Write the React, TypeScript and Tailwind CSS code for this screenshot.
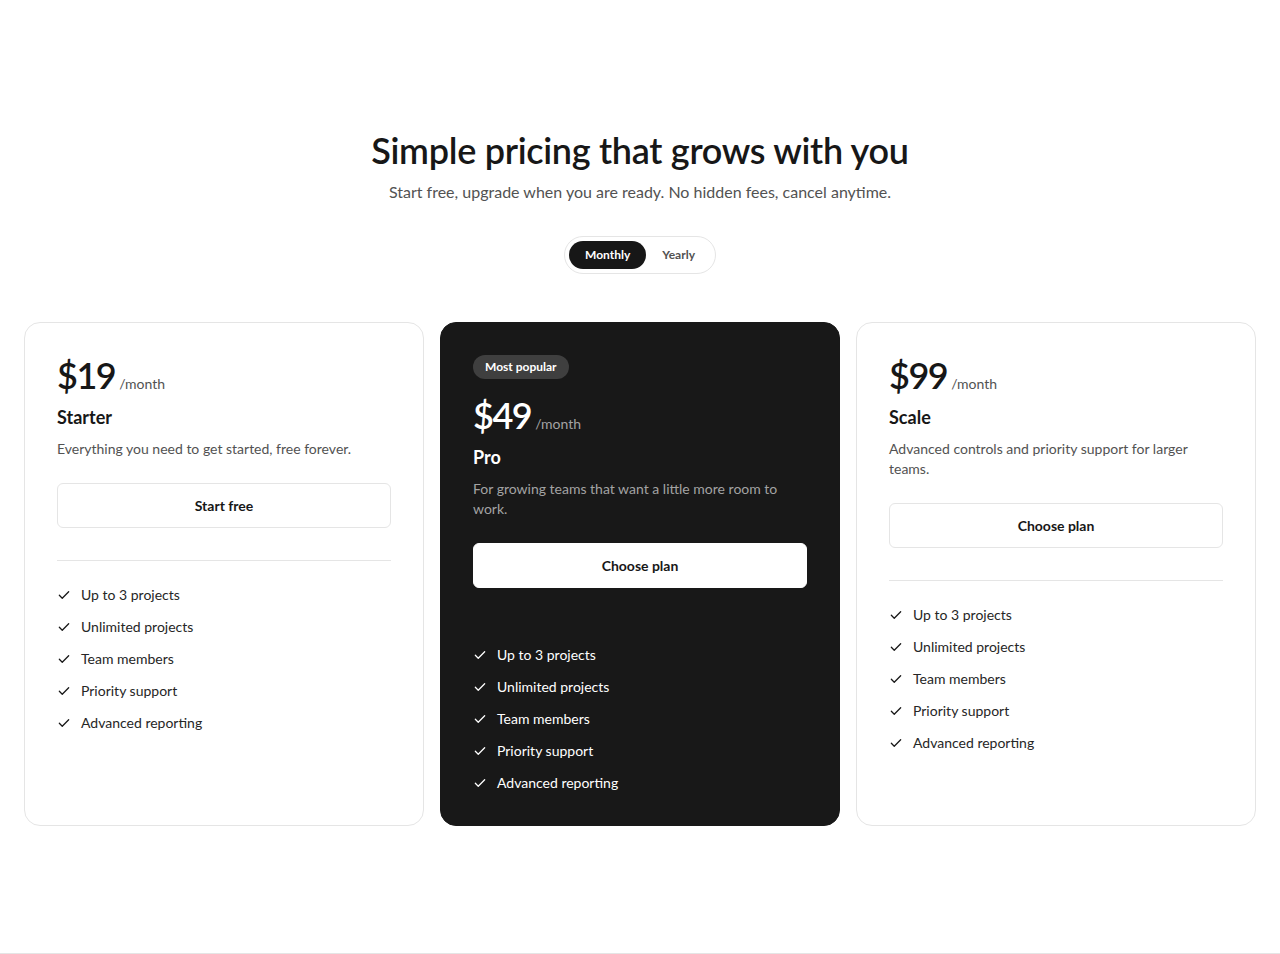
import { useState } from "react";

const features = [
  "Up to 3 projects",
  "Unlimited projects",
  "Team members",
  "Priority support",
  "Advanced reporting",
];

type Plan = {
  name: string;
  price: string;
  desc: string;
  cta: string;
  popular?: boolean;
};

const plans: Plan[] = [
  { name: "Starter", price: "$19", desc: "Everything you need to get started, free forever.", cta: "Start free" },
  { name: "Pro", price: "$49", desc: "For growing teams that want a little more room to work.", cta: "Choose plan", popular: true },
  { name: "Scale", price: "$99", desc: "Advanced controls and priority support for larger teams.", cta: "Choose plan" },
];

function Check({ dark }: { dark?: boolean }) {
  return (
    <svg width="14" height="14" viewBox="0 0 24 24" fill="none" stroke={dark ? "#ffffff" : "#171717"} strokeWidth="2.2" strokeLinecap="round" strokeLinejoin="round" className="shrink-0">
      <path d="M4 12.5l5 5L20 6.5" />
    </svg>
  );
}

export default function App() {
  const [billing, setBilling] = useState<"monthly" | "yearly">("monthly");

  return (
    <div className="bg-white text-[#171717]" style={{ fontFamily: 'Lato, "Noto Sans", sans-serif' }}>
      <main className="min-h-[953px] px-6 pt-[128px]">
        <div className="flex flex-col items-center text-center">
          <h1 className="text-[36px] leading-[44px] font-semibold tracking-[-0.3px]">Simple pricing that grows with you</h1>
          <p className="mt-2 text-base leading-6 text-[#525252]">
            Start free, upgrade when you are ready. No hidden fees, cancel anytime.
          </p>
          <div className="mt-8 flex items-center rounded-full border border-[#e5e5e5] p-1">
            <button
              onClick={() => setBilling("monthly")}
              className={`rounded-full px-4 py-1.5 text-xs font-bold ${billing === "monthly" ? "bg-[#171717] text-white" : "text-[#525252]"}`}
            >
              Monthly
            </button>
            <button
              onClick={() => setBilling("yearly")}
              className={`rounded-full px-4 py-1.5 text-xs font-bold ${billing === "yearly" ? "bg-[#171717] text-white" : "text-[#525252]"}`}
            >
              Yearly
            </button>
          </div>
        </div>

        <div className="mt-12 grid grid-cols-3 gap-4">
          {plans.map((p) => {
            const dark = !!p.popular;
            return (
              <section
                key={p.name}
                className={`rounded-2xl border p-8 text-left ${dark ? "border-[#181818] bg-[#181818] text-white" : "border-[#e5e5e5] bg-white"}`}
              >
                {dark && (
                  <div className="mb-4 flex">
                    <span className="rounded-full bg-[#3f3f3f] px-3 py-1 text-xs leading-4 font-bold text-white">
                      Most popular
                    </span>
                  </div>
                )}
                <div className="flex items-baseline gap-1">
                  <span className="text-[36px] leading-10 font-semibold tracking-[-1.5px]">{p.price}</span>
                  <span className={`text-sm ${dark ? "text-[#a3a3a3]" : "text-[#525252]"}`}>/month</span>
                </div>
                <div className="mt-2 text-lg leading-7 font-bold">{p.name}</div>
                <p className={`mt-2 text-sm leading-5 ${dark ? "text-[#a3a3a3]" : "text-[#525252]"}`}>{p.desc}</p>
                <button
                  type="button"
                  className={`mt-6 flex h-[45px] w-full items-center justify-center rounded-md border text-sm font-bold ${dark ? "border-white bg-white text-[#171717]" : "border-[#e5e5e5] bg-white text-[#171717]"}`}
                >
                  {p.cta}
                </button>
                <div className={`mt-8 mb-6 h-px ${dark ? "bg-[#181818]" : "bg-[#e5e5e5]"}`} />
                <ul className="space-y-3">
                  {features.map((f) => (
                    <li key={f} className={`flex items-center gap-[10px] text-sm leading-5 ${dark ? "text-white" : "text-[#262626]"}`}>
                      <Check dark={dark} />
                      {f}
                    </li>
                  ))}
                </ul>
              </section>
            );
          })}
        </div>
      </main>
      <footer className="h-8 border-t border-[#e5e5e5]" />
    </div>
  );
}
